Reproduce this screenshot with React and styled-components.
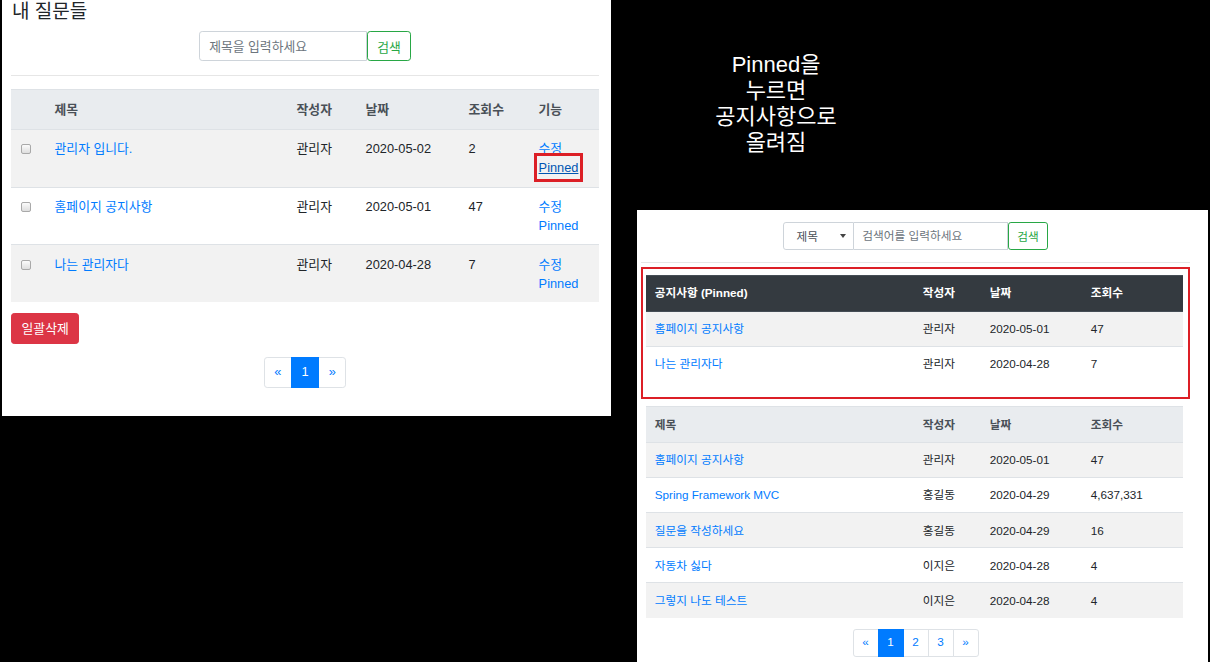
import React from "react";
import styled, { createGlobalStyle, ThemeProvider } from "styled-components";

const GlobalStyle = createGlobalStyle`
  html, body {
    margin: 0;
    padding: 0;
    background: #000;
    overflow: hidden;
  }
  body {
    font-family: "Liberation Sans", "Noto Sans CJK KR", sans-serif;
    color: #212529;
  }
`;

// every size is bootstrap's base value times the shot's scale
const px = (n) => (p) => `${(n * p.theme.s).toFixed(2)}px`;

const Canvas = styled.div`
  display: flex;
  align-items: flex-start;
  width: 1210px;
  height: 662px;
  overflow: hidden;
`;

const LeftShot = styled.section`
  box-sizing: border-box;
  width: 609px;
  height: 416px;
  margin-left: 2px;
  padding: 0 12px 0 9px;
  background: #fff;
`;

const RightColumn = styled.div`
  display: flex;
  flex-direction: column;
  width: 571px;
  margin-left: 26px;
`;

const Note = styled.p`
  box-sizing: border-box;
  width: 200px;
  height: 210px;
  margin: 0 0 0 39px;
  padding-top: 52px;
  color: #fff;
  font-size: 22px;
  line-height: 26px;
  text-align: center;
`;

const RightShot = styled.section`
  box-sizing: border-box;
  height: 452px;
  padding: 12px 18px 0 4px;
  background: #fff;
`;

const Title = styled.h4`
  margin: 0 0 7px 1px;
  font-size: 19px;
  font-weight: 400;
  line-height: 24px;
`;

const SearchForm = styled.form`
  display: flex;
  justify-content: center;
  align-items: stretch;
  height: ${px(38)};
  font-size: ${px(16)};
`;

const Select = styled.div`
  box-sizing: border-box;
  display: flex;
  align-items: center;
  justify-content: space-between;
  width: 71px;
  padding: 0 7px 0 13px;
  border: 1px solid #ced4da;
  border-radius: ${px(4)} 0 0 ${px(4)};
  color: #495057;
  &::after {
    content: "";
    border-left: 3px solid transparent;
    border-right: 3px solid transparent;
    border-top: 4px solid #444;
  }
`;

const Input = styled.input`
  box-sizing: border-box;
  width: ${(p) => p.$w}px;
  margin: 0;
  padding: 0 ${px(12)};
  border: 1px solid #ced4da;
  border-left-width: ${(p) => (p.$joined ? 0 : 1)}px;
  border-radius: ${(p) => (p.$joined ? 0 : `${(4 * p.theme.s).toFixed(2)}px 0 0 ${(4 * p.theme.s).toFixed(2)}px`)};
  font: inherit;
  color: #495057;
  outline: none;
  &::placeholder {
    color: #6c757d;
  }
`;

const SearchButton = styled.button`
  margin: 0;
  padding: 0 ${px(12)};
  border: 1px solid #28a745;
  border-radius: ${px(4)};
  background: #fff;
  color: #28a745;
  font: inherit;
`;

const Rule = styled.hr`
  margin: ${(p) => p.$top}px 0 ${(p) => p.$bottom}px;
  border: 0;
  border-top: 1px solid #e6e6e6;
`;

const Table = styled.table`
  width: ${(p) => p.$w}px;
  margin-left: ${(p) => p.$indent || 0}px;
  border-collapse: collapse;
  table-layout: fixed;
  font-size: ${px(16)};
  line-height: ${px(24)};
`;

const Col = styled.col`
  width: ${(p) => p.$w}px;
`;

const Th = styled.th`
  padding: ${px(12)};
  text-align: left;
  font-weight: 700;
  vertical-align: bottom;
  white-space: nowrap;
  border-top: ${px(1)} solid ${(p) => (p.$dark ? "#454d55" : "#dee2e6")};
  border-bottom: ${px(2)} solid ${(p) => (p.$dark ? "#454d55" : "#dee2e6")};
  background: ${(p) => (p.$dark ? "#343a40" : "#e9ecef")};
  color: ${(p) => (p.$dark ? "#fff" : "#495057")};
`;

const Row = styled.tr`
  background: ${(p) => (p.$striped ? "#f2f2f2" : "#fff")};
`;

const Td = styled.td`
  padding: ${(p) => p.theme.padY}px ${px(12)};
  vertical-align: top;
  white-space: nowrap;
  border-top: ${px(1)} solid #dee2e6;
`;

const Link = styled.a`
  display: ${(p) => (p.$block ? "block" : "inline")};
  width: fit-content;
  color: ${(p) => (p.$hover ? "#0056b3" : "#007bff")};
  text-decoration: ${(p) => (p.$hover ? "underline" : "none")};
  cursor: pointer;
  outline: ${(p) => (p.$marked ? "3px solid #dc1f26" : "none")};
  outline-offset: 2px;
`;

const Check = styled.span`
  display: inline-block;
  box-sizing: border-box;
  width: 10px;
  height: 10px;
  margin-top: 5px;
  border: 1px solid #a9a9a9;
  border-radius: 2px;
  background: linear-gradient(#fbfbfb, #dedede);
`;

const PinnedBox = styled.div`
  padding: 6px 5px 16px 3px;
  border: 2px solid #dc1f26;
`;

const DangerButton = styled.button`
  margin-top: 11px;
  padding: ${px(6)} ${px(12)};
  border: 1px solid #dc3545;
  border-radius: ${px(4)};
  background: #dc3545;
  color: #fff;
  font: inherit;
  font-size: ${px(16)};
  line-height: ${px(24)};
`;

const Pager = styled.ul`
  display: flex;
  justify-content: center;
  margin: ${(p) => p.$top}px 0 0;
  padding: 0;
  list-style: none;
  font-size: ${px(16)};
  line-height: ${px(20)};
`;

const PageItem = styled.li`
  padding: ${px(8)} ${px(12)};
  margin-left: -1px;
  border: 1px solid ${(p) => (p.$active ? "#007bff" : "#dee2e6")};
  background: ${(p) => (p.$active ? "#007bff" : "#fff")};
  color: ${(p) => (p.$active ? "#fff" : "#007bff")};
  position: relative;
  z-index: ${(p) => (p.$active ? 1 : 0)};
  &:first-child {
    margin-left: 0;
    border-radius: ${px(4)} 0 0 ${px(4)};
  }
  &:last-child {
    border-radius: 0 ${px(4)} ${px(4)} 0;
  }
`;

const Spacer = styled.div`
  height: ${(p) => p.$h}px;
`;

const myQuestions = [
  { title: "관리자 입니다.", writer: "관리자", date: "2020-05-02", hits: "2" },
  { title: "홈페이지 공지사항", writer: "관리자", date: "2020-05-01", hits: "47" },
  { title: "나는 관리자다", writer: "관리자", date: "2020-04-28", hits: "7" },
];

const pinned = [
  { title: "홈페이지 공지사항", writer: "관리자", date: "2020-05-01", hits: "47" },
  { title: "나는 관리자다", writer: "관리자", date: "2020-04-28", hits: "7" },
];

const board = [
  { title: "홈페이지 공지사항", writer: "관리자", date: "2020-05-01", hits: "47" },
  { title: "Spring Framework MVC", writer: "홍길동", date: "2020-04-29", hits: "4,637,331" },
  { title: "질문을 작성하세요", writer: "홍길동", date: "2020-04-29", hits: "16" },
  { title: "자동차 싫다", writer: "이지은", date: "2020-04-28", hits: "4" },
  { title: "그렇지 나도 테스트", writer: "이지은", date: "2020-04-28", hits: "4" },
];

const Pagination = ({ pages, top }) => (
  <Pager $top={top}>
    <PageItem>«</PageItem>
    {pages.map((n) => (
      <PageItem key={n} $active={n === 1}>{n}</PageItem>
    ))}
    <PageItem>»</PageItem>
  </Pager>
);

const RIGHT_COLS = [268, 67, 101, 101];

const BoardTable = ({ rows, dark, heading, indent }) => (
  <Table $w={537} $indent={indent}>
    <colgroup>
      {RIGHT_COLS.map((w, i) => <Col key={i} $w={w} />)}
    </colgroup>
    <thead>
      <tr>
        <Th $dark={dark}>{heading}</Th>
        <Th $dark={dark}>작성자</Th>
        <Th $dark={dark}>날짜</Th>
        <Th $dark={dark}>조회수</Th>
      </tr>
    </thead>
    <tbody>
      {rows.map((r, i) => (
        <Row key={i} $striped={i % 2 === 0}>
          <Td><Link>{r.title}</Link></Td>
          <Td>{r.writer}</Td>
          <Td>{r.date}</Td>
          <Td>{r.hits}</Td>
        </Row>
      ))}
    </tbody>
  </Table>
);

export default function App() {
  return (
    <>
      <GlobalStyle />
      <Canvas>
        <ThemeProvider theme={{ s: 0.8, padY: 9.2 }}>
          <LeftShot>
            <Title>내 질문들</Title>
            <SearchForm>
              <Input $w={168} placeholder="제목을 입력하세요" />
              <SearchButton type="button">검색</SearchButton>
            </SearchForm>
            <Rule $top={14} $bottom={13} />
            <Table $w={588}>
              <colgroup>
                {[34, 242, 69, 103, 70, 70].map((w, i) => <Col key={i} $w={w} />)}
              </colgroup>
              <thead>
                <tr>
                  <Th />
                  <Th>제목</Th>
                  <Th>작성자</Th>
                  <Th>날짜</Th>
                  <Th>조회수</Th>
                  <Th>기능</Th>
                </tr>
              </thead>
              <tbody>
                {myQuestions.map((q, i) => (
                  <Row key={i} $striped={i % 2 === 0}>
                    <Td><Check /></Td>
                    <Td><Link>{q.title}</Link></Td>
                    <Td>{q.writer}</Td>
                    <Td>{q.date}</Td>
                    <Td>{q.hits}</Td>
                    <Td>
                      <Link $block>수정</Link>
                      <Link $block $hover={i === 0} $marked={i === 0}>Pinned</Link>
                    </Td>
                  </Row>
                ))}
              </tbody>
            </Table>
            <DangerButton type="button">일괄삭제</DangerButton>
            <Pagination pages={[1]} top={13} />
          </LeftShot>
        </ThemeProvider>

        <RightColumn>
          <Note>
            Pinned을
            <br />
            누르면
            <br />
            공지사항으로
            <br />
            올려짐
          </Note>
          <ThemeProvider theme={{ s: 0.73, padY: 8.3 }}>
            <RightShot>
              <SearchForm>
                <Select>제목</Select>
                <Input $w={154} $joined placeholder="검색어를 입력하세요" />
                <SearchButton type="button">검색</SearchButton>
              </SearchForm>
              <Rule $top={12} $bottom={4} />
              <PinnedBox>
                <BoardTable rows={pinned} dark heading="공지사항 (Pinned)" />
              </PinnedBox>
              <Spacer $h={7} />
              <BoardTable rows={board} heading="제목" indent={5} />
              <Pagination pages={[1, 2, 3]} top={11} />
            </RightShot>
          </ThemeProvider>
        </RightColumn>
      </Canvas>
    </>
  );
}
